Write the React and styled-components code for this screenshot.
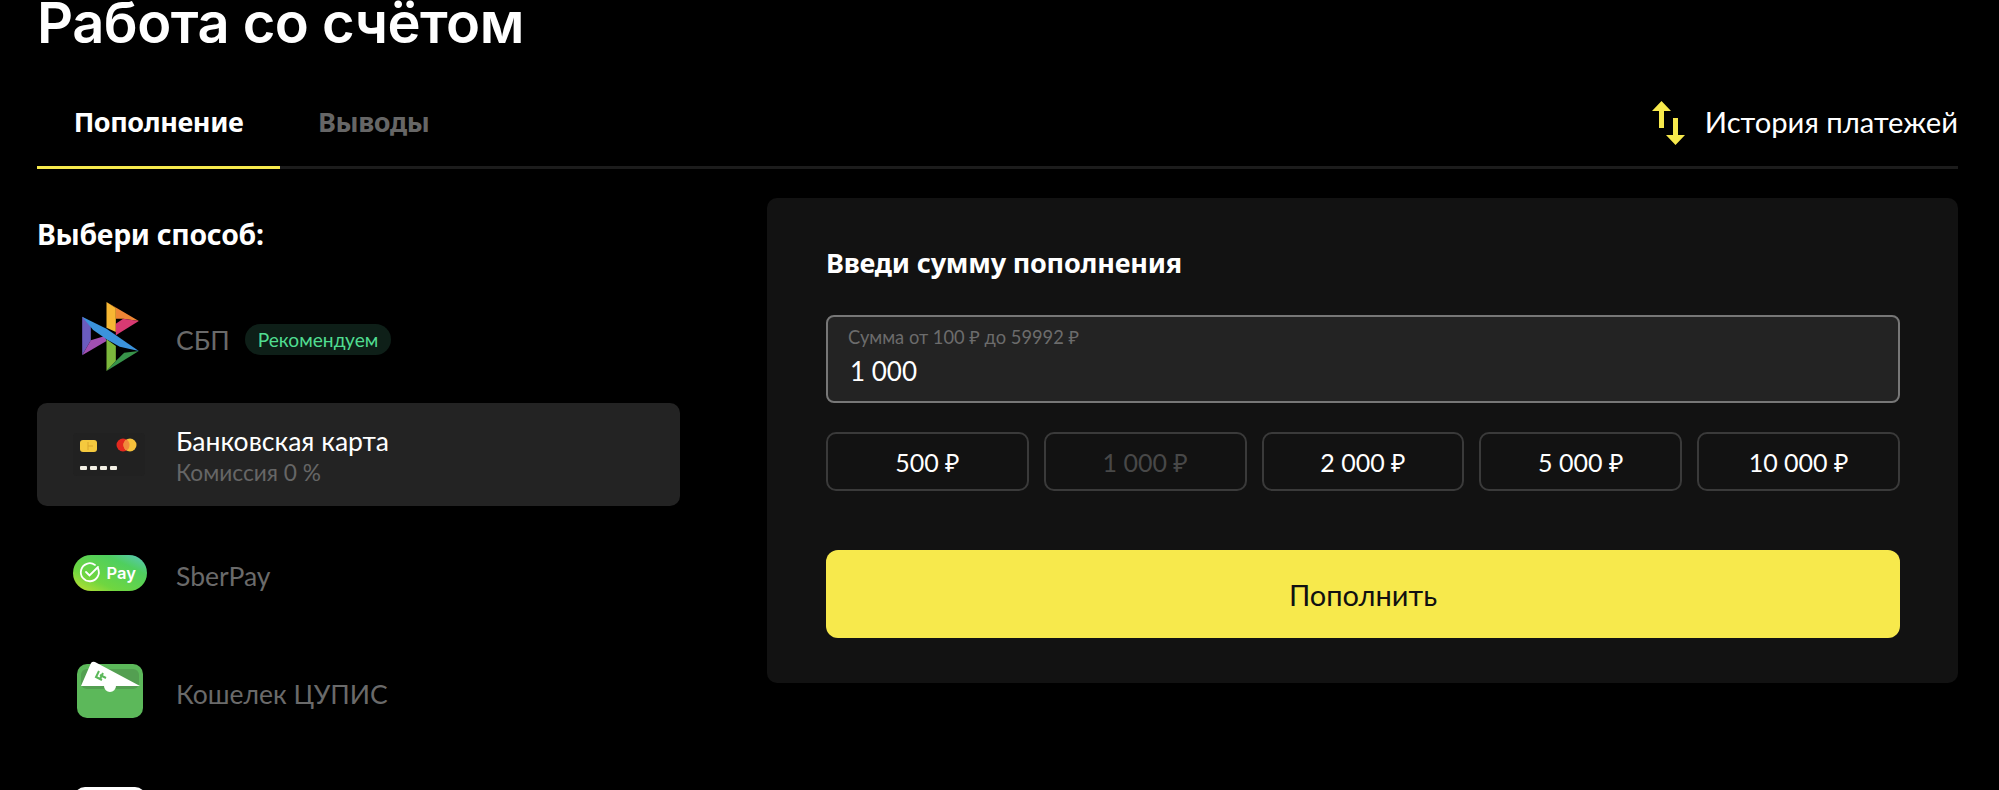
import React from "react";
import styled, { createGlobalStyle } from "styled-components";

const Global = createGlobalStyle`
  html, body { margin: 0; padding: 0; background: #000; height: 790px; overflow: hidden; }
  * { box-sizing: border-box; }
  body { font-family: "Lato", "Noto Sans", sans-serif; color: #fff; }
`;

const Page = styled.div`
  padding: 0 41px 0 37px;
  height: 790px;
  overflow: hidden;
`;
const Title = styled.h1`
  margin: 0;
  height: 55px;
  font-family: "Inter", "Noto Sans", sans-serif;
  font-weight: 600;
  font-size: 56px;
  line-height: 47px;
  letter-spacing: -0.5px;
  color: #fff;
`;
const TabBar = styled.div`
  margin-top: 36px;
  height: 78px;
  display: flex;
  align-items: stretch;
  justify-content: space-between;
  border-bottom: 3px solid #1c1c1c;
`;
const Tabs = styled.div`
  display: flex;
  gap: 38px;
`;
const Tab = styled.div`
  width: ${(p) => p.$w}px;
  margin-bottom: -3px;
  padding-top: 11px;
  text-align: ${(p) => (p.$active ? "center" : "left")};
  font-family: "Noto Sans", sans-serif;
  font-weight: 700;
  font-size: 27px;
  line-height: 40px;
  letter-spacing: -0.4px;
  color: ${(p) => (p.$active ? "#fff" : "#666")};
  border-bottom: 3px solid ${(p) => (p.$active ? "#f7e94c" : "transparent")};
`;
const HistoryLink = styled.div`
  display: flex;
  align-items: flex-start;
  gap: 20px;
  padding-top: 6px;
  font-size: 29.2px;
  line-height: 50px;
  color: #fff;
`;
const HistoryGlyph = styled.svg`
  flex: none;
  margin-top: 4px;
`;
const Columns = styled.div`
  margin-top: 29px;
  display: grid;
  grid-template-columns: 643px 1191px;
  justify-content: space-between;
  align-items: start;
`;
const SideTitle = styled.h2`
  margin: 19px 0 0;
  font-family: "Noto Sans", sans-serif;
  font-weight: 700;
  font-size: 28.4px;
  line-height: 34px;
  letter-spacing: -0.3px;
  color: #fff;
`;
const Methods = styled.div`
  margin-top: 34px;
  display: flex;
  flex-direction: column;
  gap: 15px;
`;
const Method = styled.div`
  height: 103px;
  flex: none;
  display: flex;
  align-items: center;
  gap: 26px;
  padding-left: 33px;
  border-radius: 10px;
  background: ${(p) => (p.$active ? "#232323" : "transparent")};
`;
const IconBox = styled.div`
  width: 80px;
  height: 80px;
  flex: none;
  display: flex;
  align-items: center;
  justify-content: center;
`;
const MethodText = styled.div`
  display: flex;
  flex-direction: column;
  padding-top: ${(p) => (p.$active ? 3 : 6)}px;
`;
const MethodRow = styled.div`
  display: flex;
  align-items: center;
  gap: 15px;
`;
const MethodName = styled.div`
  font-size: 26.5px;
  line-height: 32px;
  color: ${(p) => (p.$active ? "#fff" : "#6a6a6a")};
`;
const MethodNote = styled.div`
  font-size: 22.7px;
  line-height: 31px;
  color: #666;
`;
const Badge = styled.span`
  height: 31px;
  padding: 0 13px;
  display: inline-flex;
  align-items: center;
  border-radius: 16px;
  background: #0e1f18;
  color: #50dc90;
  font-size: 19.2px;
`;
const Panel = styled.section`
  height: 485px;
  padding: 46px 58px 0 59px;
  border-radius: 10px;
  background: #121212;
`;
const PanelTitle = styled.h3`
  margin: 0;
  font-family: "Noto Sans", sans-serif;
  font-weight: 700;
  font-size: 27px;
  line-height: 38px;
  letter-spacing: -0.2px;
  color: #fff;
`;
const InputField = styled.div`
  margin-top: 33px;
  height: 88px;
  padding: 8px 20px 0;
  border: 2px solid #777;
  border-radius: 8px;
  background: #232323;
`;
const InputLabel = styled.div`
  font-size: 18.3px;
  line-height: 24px;
  color: #6c6c6c;
`;
const InputValue = styled.div`
  margin-top: 3px;
  padding-left: 2px;
  font-size: 26px;
  line-height: 38px;
  color: #fff;
`;
const Chips = styled.div`
  margin-top: 29px;
  display: grid;
  grid-template-columns: repeat(5, 1fr);
  gap: 15px;
`;
const Chip = styled.div`
  height: 59px;
  display: flex;
  align-items: center;
  justify-content: center;
  border: 2px solid #3a3a3a;
  border-radius: 10px;
  font-size: 25px;
  color: ${(p) => (p.$off ? "#484848" : "#fff")};
`;
const Submit = styled.button`
  display: block;
  width: 100%;
  margin-top: 59px;
  height: 88px;
  border: 0;
  border-radius: 12px;
  background: #f7e94c;
  color: #111;
  font-family: inherit;
  font-size: 29px;
`;
const PayWord = styled.text`
  font-family: "Inter", "Noto Sans", sans-serif;
  font-weight: 600;
  font-size: 16.5px;
  fill: #fff;
`;

const HistoryIcon = () => (
  <HistoryGlyph width="33" height="44" viewBox="0 0 33 44">
    <path fill="#f7e94c" d="M9.500 0l9.500 10h-7v17h-5V10H0zM21 17h5v17h7L23.500 44 14 34h7z" />
  </HistoryGlyph>
);

const SbpIcon = () => (
  <svg width="57" height="69" viewBox="62 38 170 207">
    <path fill="#f7b733" d="M135 38l28 18v72l-28-13z" />
    <path fill="#ee8535" d="M135 38l97 57-47-7h-22V56z" />
    <path fill="#d83a72" d="M232 95l-69 43v-35l22-15z" />
    <path fill="#6a5cbe" d="M62 82l26 18v53l-26 45z" />
    <path fill="#a24fb2" d="M62 198l73-43-5-15-42 13z" />
    <path fill="#7cb83c" d="M135 150l28 20v45l-28 30z" />
    <path fill="#38934a" d="M135 245l97-60-44 5-25 25z" />
    <path fill="#3b93dc" d="M62 82l73 36 97 67-57-13-40-22-40-28z" />
  </svg>
);

const CardIcon = () => (
  <svg width="80" height="80" viewBox="0 0 80 80">
    <rect x="3" y="18" width="72" height="43" rx="4" fill="#212121" />
    <rect x="10" y="25" width="17" height="12" rx="3" fill="#f5c93e" />
    <path d="M18 27v8M18 31h5" stroke="#dba72c" strokeWidth="1" fill="none" />
    <circle cx="53" cy="30" r="6.500" fill="#e3291f" />
    <circle cx="60" cy="30" r="6.500" fill="#f6c13b" />
    <path d="M56.500 24.500a6.500 6.500 0 0 1 0 11a6.500 6.500 0 0 1 0-11z" fill="#f08a3c" />
    <g fill="#f4f1e6">
      <rect x="10" y="51" width="7" height="4" rx="1" />
      <rect x="20" y="51" width="7" height="4" rx="1" />
      <rect x="30" y="51" width="7" height="4" rx="1" />
      <rect x="40" y="51" width="7" height="4" rx="1" />
    </g>
  </svg>
);

const SberIcon = () => (
  <svg width="74" height="36" viewBox="0 0 74 36">
    <defs>
      <linearGradient id="sberFill" x1="0" y1="1" x2="1" y2="0">
        <stop offset="0" stopColor="#c5e032" />
        <stop offset="0.3" stopColor="#6fd640" />
        <stop offset="0.72" stopColor="#4fcf5e" />
        <stop offset="1" stopColor="#5bc7c6" />
      </linearGradient>
    </defs>
    <rect width="74" height="36" rx="18" fill="url(#sberFill)" />
    <path d="M25 13.500a9 9 0 1 1-3-3.600" fill="none" stroke="#fff" strokeWidth="1.800" strokeLinecap="round" />
    <path d="M13 17l3.500 3.500L25 12" fill="none" stroke="#fff" strokeWidth="1.800" strokeLinecap="round" />
    <PayWord x="33.500" y="24">Pay</PayWord>
  </svg>
);

const WalletIcon = () => (
  <svg width="68" height="60" viewBox="0 0 68 60">
    <rect x="1" y="3" width="66" height="54" rx="10" fill="#5cb85a" />
    <rect x="5" y="8" width="58" height="20" rx="6" fill="#539f51" />
    <path fill="#fff" d="M5 25L15 2q1.500-2 4-1L64 25H40a6 6 0 0 1-12 0z" />
    <path d="M23 10l-3 6 6 3M27 12l-3 6M24 14l6 3" fill="none" stroke="#5cb85a" strokeWidth="2" />
  </svg>
);

const WhiteIcon = () => (
  <svg width="72" height="44" viewBox="0 0 72 44">
    <rect width="72" height="44" rx="11" fill="#fff" />
  </svg>
);

const amounts = [
  { label: "500 ₽" },
  { label: "1 000 ₽", off: true },
  { label: "2 000 ₽" },
  { label: "5 000 ₽" },
  { label: "10 000 ₽" },
];

export default function App() {
  return (
    <Page>
      <Global />
      <Title>Работа со счётом</Title>
      <TabBar>
        <Tabs>
          <Tab $active $w={243}>Пополнение</Tab>
          <Tab $w={130}>Выводы</Tab>
        </Tabs>
        <HistoryLink>
          <HistoryIcon />
          История платежей
        </HistoryLink>
      </TabBar>
      <Columns>
        <div>
          <SideTitle>Выбери способ:</SideTitle>
          <Methods>
            <Method>
              <IconBox><SbpIcon /></IconBox>
              <MethodText>
                <MethodRow>
                  <MethodName>СБП</MethodName>
                  <Badge>Рекомендуем</Badge>
                </MethodRow>
              </MethodText>
            </Method>
            <Method $active>
              <IconBox><CardIcon /></IconBox>
              <MethodText $active>
                <MethodName $active>Банковская карта</MethodName>
                <MethodNote>Комиссия 0 %</MethodNote>
              </MethodText>
            </Method>
            <Method>
              <IconBox><SberIcon /></IconBox>
              <MethodText>
                <MethodName>SberPay</MethodName>
              </MethodText>
            </Method>
            <Method>
              <IconBox><WalletIcon /></IconBox>
              <MethodText>
                <MethodName>Кошелек ЦУПИС</MethodName>
              </MethodText>
            </Method>
            <Method>
              <IconBox><WhiteIcon /></IconBox>
            </Method>
          </Methods>
        </div>
        <Panel>
          <PanelTitle>Введи сумму пополнения</PanelTitle>
          <InputField>
            <InputLabel>Сумма от 100 ₽ до 59992 ₽</InputLabel>
            <InputValue>1 000</InputValue>
          </InputField>
          <Chips>
            {amounts.map((a) => (
              <Chip key={a.label} $off={a.off}>{a.label}</Chip>
            ))}
          </Chips>
          <Submit>Пополнить</Submit>
        </Panel>
      </Columns>
    </Page>
  );
}
